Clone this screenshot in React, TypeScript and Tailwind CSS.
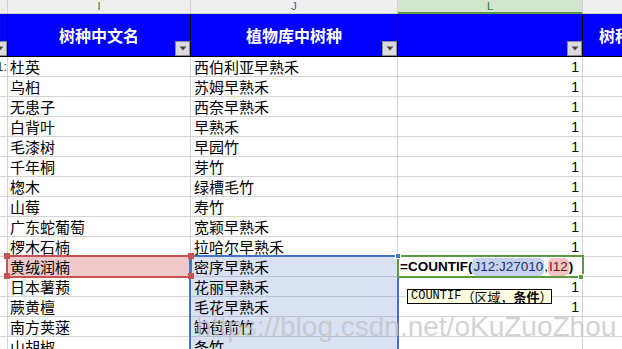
import React from "react";

const species = [
  "杜英", "乌桕", "无患子", "白背叶", "毛漆树", "千年桐", "楤木", "山莓",
  "广东蛇葡萄", "椤木石楠", "黄绒润楠", "日本薯蓣", "蕨黄檀", "南方荚蒾", "山胡椒",
];

const library = [
  "西伯利亚早熟禾", "苏姆早熟禾", "西奈早熟禾", "早熟禾", "早园竹", "芽竹", "绿槽毛竹", "寿竹",
  "宽颖早熟禾", "拉哈尔早熟禾", "密序早熟禾", "花丽早熟禾", "毛花早熟禾", "缺苞箭竹", "条竹",
];

const counts = ["1", "1", "1", "1", "1", "1", "1", "1", "1", "1", "", "1", "1", "", ""];

const cjk = "font-['Noto_Sans_CJK_SC',sans-serif]";

const Dropdown = () => (
  <div className="flex h-[15px] w-[15px] shrink-0 items-center justify-center border border-[#8c8c8c] bg-[#dcdcdc]">
    <svg width="8" height="5" viewBox="0 0 8 5">
      <path d="M0.5 0.5 L7.5 0.5 L4 4.5 Z" fill="#4a4a4a" />
    </svg>
  </div>
);

const HeaderCell = ({ label, drop = true }: { label?: string; drop?: boolean }) => (
  <div className="relative flex h-[43px] items-center justify-center overflow-hidden border-r border-b-[1px] border-black bg-[#0000ff]">
    {label && (
      <span className={`${cjk} text-[16px] font-bold text-white`}>{label}</span>
    )}
    {drop && (
      <div className="absolute right-0 bottom-0">
        <Dropdown />
      </div>
    )}
  </div>
);

export default function App() {
  return (
    <div className="relative h-[349px] w-[622px] overflow-hidden bg-white">
      <div className="grid grid-cols-[8px_183px_207px_185px_39px]">
        {/* column letters */}
        <div className="h-[14px] border-r border-b border-[#d0d0d0] bg-[#efefef]" />
        <div className="flex h-[14px] items-center justify-center border-r border-b border-[#d0d0d0] bg-[#efefef] font-['Liberation_Sans',sans-serif] text-[11px] text-[#5a5a6a]">I</div>
        <div className="flex h-[14px] items-center justify-center border-r border-b border-[#d0d0d0] bg-[#efefef] font-['Liberation_Sans',sans-serif] text-[11px] text-[#5a5a6a]">J</div>
        <div className="flex h-[14px] items-center justify-center border-r border-b-2 border-r-[#d0d0d0] border-b-[#5b9b42] bg-[#d3e5cc] font-['Liberation_Sans',sans-serif] text-[11px] text-[#217346]">L</div>
        <div className="h-[14px] border-b border-[#d0d0d0] bg-[#efefef]" />

        {/* table header */}
        <HeaderCell />
        <HeaderCell label="树种中文名" />
        <HeaderCell label="植物库中树种" />
        <HeaderCell />
        <div className="flex h-[43px] items-center overflow-hidden border-b border-black bg-[#0000ff] pl-[16px]">
          <span className={`${cjk} whitespace-nowrap text-[16px] font-bold text-white`}>树种名称</span>
        </div>

        {/* data rows */}
        {species.map((name, i) => {
          const selRow = i === 10;
          const blue = i >= 10;
          return (
            <React.Fragment key={name}>
              <div className="flex h-[20px] items-end justify-end overflow-hidden border-r border-b border-[#d4d4d4]">
                {i === 0 && (
                  <span className="font-['Liberation_Sans',sans-serif] text-[13px] leading-[18px] text-[#3a3a3a]">1:</span>
                )}
              </div>
              <div
                className={`flex h-[20px] items-end overflow-hidden border-r border-b border-[#d4d4d4] pl-[2px] ${
                  selRow ? "bg-[#f0caca]" : "bg-white"
                }`}
              >
                <span className={`${cjk} whitespace-nowrap text-[15px] leading-[18px] text-black`}>{name}</span>
              </div>
              <div
                className={`flex h-[20px] items-end overflow-hidden border-r border-b pl-[3px] ${
                  blue ? "border-[#b9c2dc] bg-[#dae1f3]" : "border-[#d4d4d4] bg-white"
                }`}
              >
                <span className={`${cjk} whitespace-nowrap text-[15px] leading-[18px] text-black`}>{library[i]}</span>
              </div>
              <div className="flex h-[20px] items-end justify-end overflow-hidden border-r border-b border-[#d4d4d4] pr-[3px]">
                {selRow ? (
                  <div className="flex w-full items-center pl-[2px] font-['Liberation_Sans',sans-serif] text-[13.5px] leading-[18px] text-black">
                    <span className="font-bold">=COUNTIF(</span>
                    <span className="rounded-[5px] bg-[#c6d3ef] px-[1px] text-[#1a2f66]">J12:J27010</span>
                    <span>,</span>
                    <span className="rounded-[5px] bg-[#f1c3c3] px-[1px] text-[#6a1a1a]">I12</span>
                    <span className="font-bold">)</span>
                  </div>
                ) : (
                  <span className="font-['Liberation_Sans',sans-serif] text-[14px] leading-[18px] text-black">{counts[i]}</span>
                )}
              </div>
              <div className="h-[20px] border-b border-[#d4d4d4]" />
            </React.Fragment>
          );
        })}
      </div>

      {/* selection overlays */}
      <div className="absolute left-[6px] top-[255px] h-[23px] w-[186px] border-2 border-[#c65353]" />
      <div className="absolute left-[189px] top-[255px] h-[110px] w-[210px] border-2 border-[#4472c4]" />
      <div className="absolute left-[397px] top-[255px] h-[23px] w-[187px] border-2 border-[#5b9b42]" />
      <div className="absolute left-[4px] top-[253px] h-[6px] w-[6px] bg-[#c65353]" />
      <div className="absolute left-[4px] top-[273px] h-[6px] w-[6px] bg-[#c65353]" />
      <div className="absolute left-[188px] top-[253px] h-[6px] w-[6px] bg-[#c65353]" />
      <div className="absolute left-[188px] top-[273px] h-[6px] w-[6px] bg-[#c65353]" />
      <div className="absolute left-[395px] top-[253px] h-[6px] w-[6px] border border-white bg-[#4472c4]" />
      <div className="absolute left-[578px] top-[274px] h-[6px] w-[6px] border border-white bg-[#5b9b42]" />

      {/* function tooltip */}
      <div className="absolute left-[407px] top-[289px] flex h-[15px] w-[145px] items-center overflow-hidden whitespace-nowrap border border-black bg-[#ffffe1] pl-[3px] font-['Liberation_Mono','Noto_Sans_CJK_SC',monospace] text-[12px] leading-[13px] text-black">
        <span className="shrink-0">COUNTIF</span>
        <span className={`${cjk} shrink-0 text-[13px]`}>（区域，</span>
        <span className={`${cjk} shrink-0 text-[13px] font-bold`}>条件</span>
        <span className={`${cjk} shrink-0 text-[13px]`}>）</span>
      </div>

      {/* watermark */}
      <div className="pointer-events-none absolute left-[196px] top-[313px] whitespace-nowrap font-['Liberation_Sans',sans-serif] text-[28px] leading-[28px] text-[rgba(195,195,200,0.75)]">
        https://blog.csdn.net/oKuZuoZhou
      </div>
    </div>
  );
}
